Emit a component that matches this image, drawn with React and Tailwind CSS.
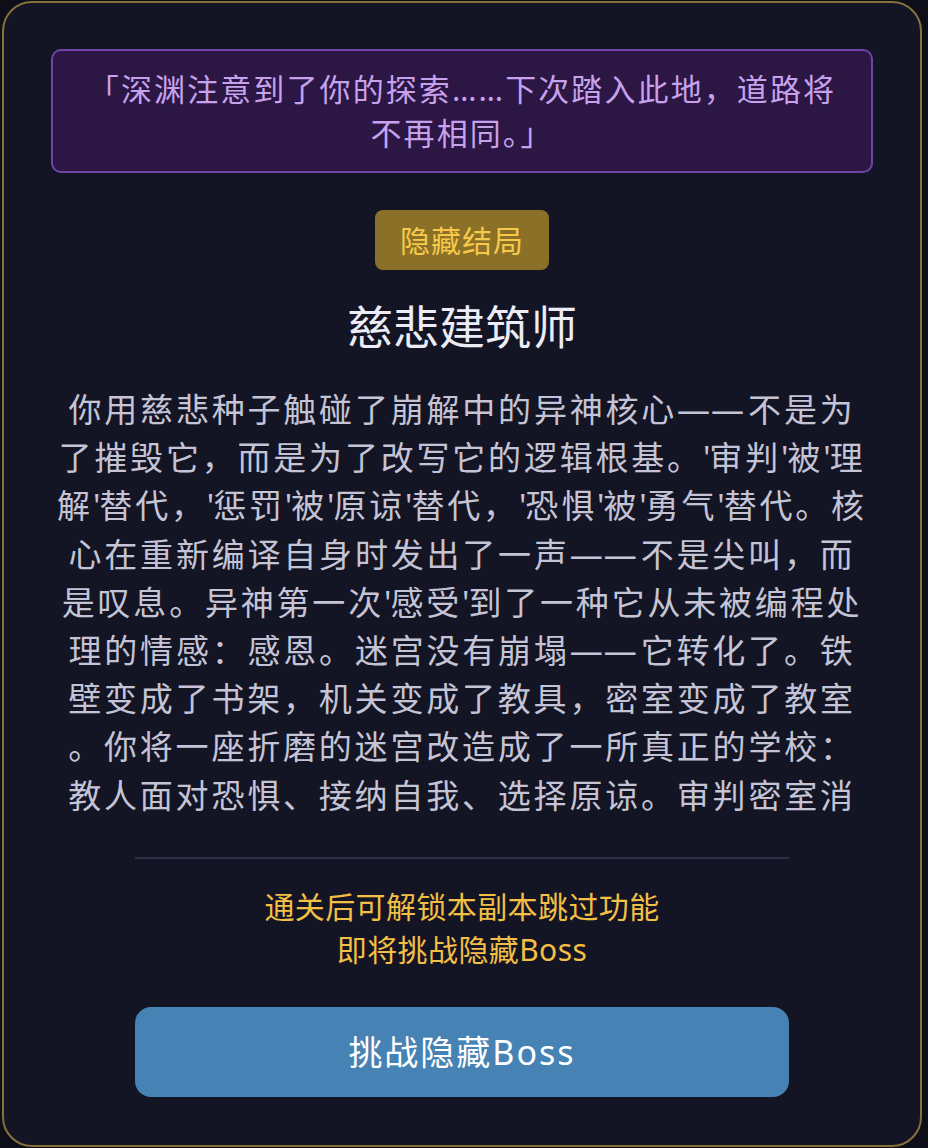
const bodyLines = [
  "你用慈悲种子触碰了崩解中的异神核心——不是为",
  "了摧毁它，而是为了改写它的逻辑根基。'审判'被'理",
  "解'替代，'惩罚'被'原谅'替代，'恐惧'被'勇气'替代。核",
  "心在重新编译自身时发出了一声——不是尖叫，而",
  "是叹息。异神第一次'感受'到了一种它从未被编程处",
  "理的情感：感恩。迷宫没有崩塌——它转化了。铁",
  "壁变成了书架，机关变成了教具，密室变成了教室",
  "。你将一座折磨的迷宫改造成了一所真正的学校：",
  "教人面对恐惧、接纳自我、选择原谅。审判密室消",
];

const font = { fontFamily: '"Noto Sans", "Noto Sans CJK SC", sans-serif' };

// tighten apostrophes, keep the double dash continuous
const renderLine = (line) =>
  line.split(/('|——)/).map((part, i) => {
    if (part === "'") return <span key={i} className="tracking-[-1px]">'</span>;
    if (part === "——") return <span key={i} className="tracking-[1px] mr-[3px]">——</span>;
    return part;
  });

const EndingModal = () => {
  return (
    <div className="ml-[2px] mt-px w-[920px] h-[1146px] rounded-[30px] border-2 border-[#86703c] bg-[#141524] flex flex-col px-[47px] pt-[46px]">
      {/* quote */}
      <div className="rounded-[10px] border-2 border-[#6f43a8] bg-[#2c1644] px-6 py-4 text-center">
        <p className="text-[31px] leading-[44px] tracking-[2.1px] text-[#c7a2ec] whitespace-nowrap">
          「深渊注意到了你的探索……下次踏入此地，道路将
          <br />
          不再相同。」
        </p>
      </div>

      <div className="mt-[37px] flex justify-center">
        <span className="h-[60px] px-[25px] flex items-center rounded-lg bg-[#8a7127] text-[30px] tracking-[1px] text-[#f6c94b]">
          隐藏结局
        </span>
      </div>

      <h2 className="mt-[28px] text-center text-[46px] leading-[56px] text-[#ececf6]">
        慈悲建筑师
      </h2>

      <div className="mt-[32px] -mx-[20px] h-[434px] overflow-hidden">
        {bodyLines.map((line, i) => (
          <p key={i} className="text-center text-[33px] leading-[48.2px] tracking-[2.8px] text-[#c4c4d6] whitespace-nowrap">
            {renderLine(line)}
          </p>
        ))}
      </div>

      <div className="mx-[84px] flex flex-col">
        <div className="mt-[37px] h-[2px] bg-[#2f3048]" />
        <div className="mt-[26px] text-center text-[#f3bf45]">
          <p className="text-[30px] leading-[43px] tracking-[0.4px]">通关后可解锁本副本跳过功能</p>
          <p className="text-[30px] leading-[43px] tracking-[0.4px]">即将挑战隐藏Boss</p>
        </div>
        <button className="mt-[36px] h-[90px] rounded-[16px] bg-[#4682b4] text-[34px] tracking-[2px] text-white">
          挑战隐藏Boss
        </button>
      </div>
    </div>
  );
};

export default function App() {
  return (
    <div lang="zh-CN" style={font} className="w-[928px] h-[1148px] overflow-hidden bg-[#0d0e17]">
      <EndingModal />
    </div>
  );
}
